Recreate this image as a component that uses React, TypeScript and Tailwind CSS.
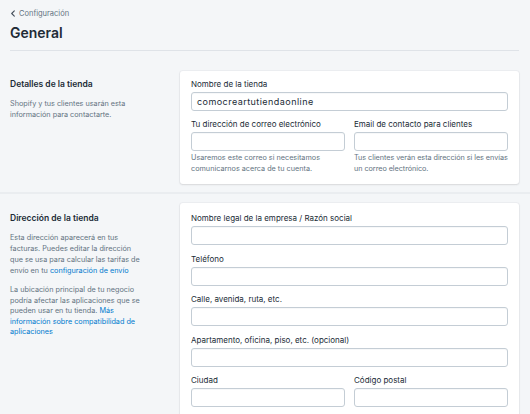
import React from "react";

function Field({ label, value, className = "" }: { label: string; value?: string; className?: string }) {
  return (
    <div className={"flex flex-col " + className}>
      <div className="text-[8px] leading-[11px] text-[#212b36] mb-[2px]">{label}</div>
      <div className="h-[19px] rounded-[3px] border border-[#c4cdd5] bg-white flex items-center px-[5px] text-[9px] tracking-[0.45px] text-[#212b36] shadow-[inset_0_1px_0_0_rgba(99,115,129,0.05)]">
        {value}
      </div>
    </div>
  );
}

export default function App() {
  return (
    <div
      className="w-[530px] h-[414px] overflow-hidden bg-[#f4f6f8]"
      style={{ fontFamily: "Inter, 'Noto Sans', sans-serif" }}
    >
      <div className="px-[10px]">
        <div className="pt-[8px] flex items-center gap-[3px] text-[7.5px] leading-[11px] text-[#637381]">
          <svg width="6" height="7" viewBox="0 0 6 8" fill="none">
            <path d="M4.5 1 L1.5 4 L4.5 7" stroke="#454f5b" strokeWidth="1.3" strokeLinecap="round" strokeLinejoin="round" />
          </svg>
          <span>Configuración</span>
        </div>
        <div className="mt-[4px] text-[14px] leading-[20px] font-semibold text-[#212b36]">General</div>
        <div className="mt-[7px] mr-[1px] border-t border-[#dfe3e8]" />
      </div>

      <div className="flex px-[10px] pt-[20px] pb-[8px]">
        <div className="w-[170px] pt-[7px]">
          <div className="text-[8.5px] leading-[12px] font-semibold text-[#212b36]">Detalles de la tienda</div>
          <div className="mt-[8px] w-[134px] text-[7.25px] leading-[11px] text-[#637381]">
            Shopify y tus clientes usarán esta información para contactarte.
          </div>
        </div>
        <div className="w-[339px] bg-white rounded-[3px] shadow-[0_0_0_1px_rgba(63,63,68,0.04),0_1px_2px_0_rgba(63,63,68,0.12)] px-[11px] pt-[8px] pb-[10px]">
          <Field label="Nombre de la tienda" value="comocreartutiendaonline" />
          <div className="mt-[8px] grid grid-cols-2 gap-[9px]">
            <div>
              <Field label="Tu dirección de correo electrónico" />
              <div className="mt-[1px] text-[7.25px] leading-[11px] text-[#637381]">
                Usaremos este correo si necesitamos comunicarnos acerca de tu cuenta.
              </div>
            </div>
            <div>
              <Field label="Email de contacto para clientes" />
              <div className="mt-[1px] text-[7.25px] leading-[11px] text-[#637381] tracking-[-0.05px]">
                Tus clientes verán esta dirección si les envías un correo electrónico.
              </div>
            </div>
          </div>
        </div>
      </div>

      <div className="border-t-[2px] border-[#eaedf0]" />

      <div className="flex px-[10px] pt-[9px]">
        <div className="w-[170px] pt-[9px]">
          <div className="text-[8.5px] leading-[12px] font-semibold text-[#212b36]">Dirección de la tienda</div>
          <div className="mt-[8px] w-[134px] text-[7.25px] leading-[11px] text-[#637381]">
            Esta dirección aparecerá en tus facturas. Puedes editar la dirección que se usa para calcular las tarifas de envío en tu{" "}
            <span className="text-[#007ace]">configuración de envío</span>
          </div>
          <div className="mt-[9px] w-[134px] text-[7.25px] leading-[10.5px] text-[#637381]">
            La ubicación principal de tu negocio podría afectar las aplicaciones que se pueden usar en tu tienda.{" "}
            <span className="text-[#007ace]">Más información sobre compatibilidad de aplicaciones</span>
          </div>
        </div>
        <div className="w-[339px] h-[230px] bg-white rounded-[3px] shadow-[0_0_0_1px_rgba(63,63,68,0.04),0_1px_2px_0_rgba(63,63,68,0.12)] px-[11px] pt-[10px] flex flex-col gap-[8.5px]">
          <Field label="Nombre legal de la empresa / Razón social" />
          <Field label="Teléfono" />
          <Field label="Calle, avenida, ruta, etc." />
          <Field label="Apartamento, oficina, piso, etc. (opcional)" />
          <div className="grid grid-cols-2 gap-[9px]">
            <Field label="Ciudad" />
            <Field label="Código postal" />
          </div>
        </div>
      </div>
    </div>
  );
}
